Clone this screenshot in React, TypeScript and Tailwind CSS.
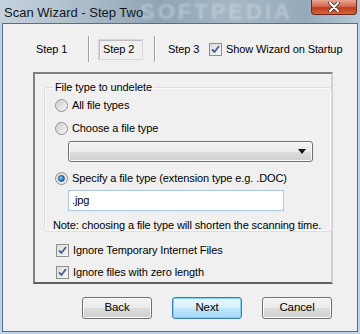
import React from "react";

const font = { fontFamily: '"Liberation Sans", Arial, sans-serif' };

function Radio({ checked }: { checked?: boolean }) {
  return (
    <span className="relative flex h-[13px] w-[13px] shrink-0 items-center justify-center rounded-full border border-[#8e8f8f] bg-gradient-to-br from-[#d8d8d8] to-[#f7f7f7]">
      <span className="h-[9px] w-[9px] rounded-full bg-gradient-to-br from-[#cfcfcf] to-[#f4f4f4]" />
      {checked && (
        <span className="absolute h-[7px] w-[7px] rounded-full border border-[#1c5180] bg-[radial-gradient(circle_at_35%_35%,#9ad8ff,#1f7cc4_60%,#0d4a86)]" />
      )}
    </span>
  );
}

function Check() {
  return (
    <span className="flex h-[13px] w-[13px] shrink-0 items-center justify-center border border-[#8e8f8f] bg-gradient-to-br from-[#dcdcdc] to-[#f8f8f8]">
      <svg width="9" height="9" viewBox="0 0 9 9">
        <path d="M1 4.5 L3.5 7 L8 1" fill="none" stroke="#4a5f97" strokeWidth="1.8" />
      </svg>
    </span>
  );
}

function Button({ label, primary }: { label: string; primary?: boolean }) {
  return (
    <button
      className={`h-[22px] w-[70px] rounded-[3px] border text-[11.5px] text-black ${
        primary
          ? "border-[#3c7fb1] bg-[linear-gradient(#eaf6fd_0%,#d9f0fc_50%,#bee6fd_51%,#a7d9f5_100%)] shadow-[inset_0_0_0_1px_#7fd0f5]"
          : "border-[#707070] bg-[linear-gradient(#f2f2f2_0%,#ebebeb_50%,#dddddd_51%,#cfcfcf_100%)] shadow-[inset_0_0_0_1px_#fbfbfb]"
      }`}
    >
      {label}
    </button>
  );
}

function Separator() {
  return (
    <div className="flex h-[26px]">
      <div className="w-px bg-[#a0a0a0]" />
      <div className="w-px bg-white" />
    </div>
  );
}

export default function App() {
  return (
    <div
      className="relative h-[334px] w-[360px] overflow-hidden bg-[#bcd4ec] text-[11px] tracking-[-0.1px] text-black"
      style={font}
    >
      {/* title bar */}
      <div className="relative h-[23px] overflow-hidden bg-[linear-gradient(90deg,#c4d2dd_0%,#a9bac8_25%,#8ea3b5_45%,#a6b8c6_65%,#95aabb_85%,#b8c8d6_100%)]">
        <div className="absolute left-[140px] top-0 text-[22px] font-bold leading-[23px] tracking-[3px] text-[#d4dde4] opacity-50 blur-[1px]">
          SOFTPEDIA
        </div>
        <div className="absolute left-[4px] top-[3px] text-[13px] tracking-normal text-[#101820]">
          Scan Wizard - Step Two
        </div>
        <div className="absolute right-[3px] top-0 flex h-[15px] w-[46px] items-center justify-center rounded-b-[4px] border border-t-0 border-[#6b2a20] bg-[linear-gradient(#e8a493_0%,#d36b52_45%,#c2391c_55%,#d2693c_100%)]">
          <svg width="12" height="10" viewBox="0 0 12 10">
            <path d="M2 1 L10 9 M10 1 L2 9" stroke="#40302c" strokeWidth="3.6" strokeLinecap="round" />
            <path d="M2 1 L10 9 M10 1 L2 9" stroke="#ffffff" strokeWidth="2" strokeLinecap="round" />
          </svg>
        </div>
      </div>

      {/* client area */}
      <div className="ml-[2px] h-[309px] w-[356px] border border-[#5b6e80] bg-[#f0f0f0]">
        {/* steps */}
        <div className="mt-[12px] flex h-[26px] items-center">
          <div className="ml-[33px] w-[52px]">Step 1</div>
          <Separator />
          <div className="ml-[8px] flex h-[21px] w-[45px] items-center border border-[#d8d8d8] pl-[4px] shadow-[inset_1px_1px_0_#bcbcbc]">
            Step 2
          </div>
          <div className="ml-[11px]">
            <Separator />
          </div>
          <div className="ml-[12px] w-[41px]">Step 3</div>
          <Check />
          <div className="ml-[4px]">Show Wizard on Startup</div>
        </div>

        {/* panel */}
        <div className="ml-[30px] mt-[10px] h-[212px] w-[300px] border-2 border-[#a0a0a0] border-r-[#d0d0d0] border-b-[#606060] border-l-[#808080] border-t-[#808080]">
          <fieldset className="mx-[9px] mt-[6px] h-[152px] rounded-[3px] border border-[#d5dfe5] px-[10px] shadow-[inset_0_0_0_1px_#fbfbfb]">
            <legend className="ml-[-2px] px-[2px] leading-[14px]">File type to undelete</legend>
            <div className="flex h-[23px] items-center gap-[4px]">
              <Radio />
              <span>All file types</span>
            </div>
            <div className="flex h-[23px] items-center gap-[4px]">
              <Radio />
              <span>Choose a file type</span>
            </div>
            <div className="ml-[13px] mt-[1px] flex h-[21px] w-[245px] items-center justify-end rounded-[3px] border border-[#707070] bg-[linear-gradient(#f2f2f2_0%,#ebebeb_50%,#dddddd_51%,#cfcfcf_100%)] pr-[6px] shadow-[inset_0_0_0_1px_#fbfbfb]">
              <svg width="8" height="5" viewBox="0 0 8 5">
                <path d="M0 0 H8 L4 5 Z" fill="#111" />
              </svg>
            </div>
            <div className="mt-[5px] flex h-[23px] items-center gap-[4px]">
              <Radio checked />
              <span>Specify a file type (extension type e.g. .DOC)</span>
            </div>
            <div className="ml-[13px] flex h-[21px] w-[216px] items-center border border-[#abc7e2] bg-white pl-[3px]">
              .jpg
            </div>
            <div className="-ml-[2px] mt-[7px] whitespace-nowrap leading-[14px]">
              Note: choosing a file type will shorten the scanning time.
            </div>
          </fieldset>

          <div className="ml-[21px] mt-[11px] flex h-[14px] items-center gap-[4px]">
            <Check />
            <span>Ignore Temporary Internet Files</span>
          </div>
          <div className="ml-[21px] mt-[8px] flex h-[14px] items-center gap-[4px]">
            <Check />
            <span>Ignore files with zero length</span>
          </div>
        </div>

        {/* buttons */}
        <div className="ml-[79px] mt-[13px] flex gap-[20px]">
          <Button label="Back" />
          <Button label="Next" primary />
          <Button label="Cancel" />
        </div>
      </div>
    </div>
  );
}
